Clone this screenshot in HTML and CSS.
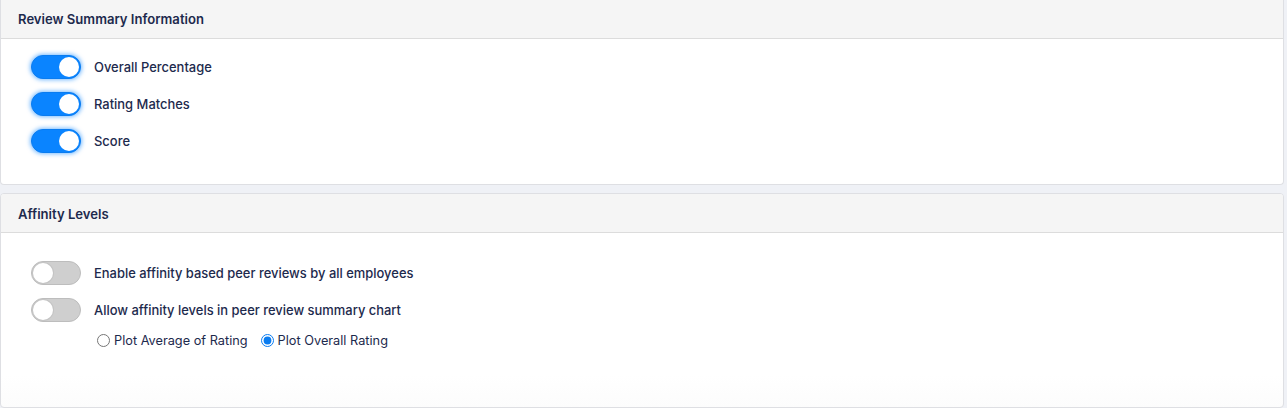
FILE: index.html
```html
<!DOCTYPE html>
<html lang="en">
<head>
  <meta charset="UTF-8" />
  <title>Review Settings</title>
  <link rel="stylesheet" href="styles.css">
</head>
<body>
  <section class="card card-summary">
    <div class="card-head">Review Summary Information</div>
    <div class="card-body">
      <label class="switch-row">
        <input type="checkbox" class="switch" checked>
        <span>Overall Percentage</span>
      </label>
      <label class="switch-row">
        <input type="checkbox" class="switch" checked>
        <span>Rating Matches</span>
      </label>
      <label class="switch-row">
        <input type="checkbox" class="switch" checked>
        <span>Score</span>
      </label>
    </div>
  </section>

  <section class="card card-affinity">
    <div class="card-head">Affinity Levels</div>
    <div class="card-body">
      <label class="switch-row">
        <input type="checkbox" class="switch">
        <span>Enable affinity based peer reviews by all employees</span>
      </label>
      <label class="switch-row">
        <input type="checkbox" class="switch">
        <span>Allow affinity levels in peer review summary chart</span>
      </label>
      <div class="radio-row">
        <label class="radio"><input type="radio" name="plot"> Plot Average of Rating</label>
        <label class="radio"><input type="radio" name="plot" checked> Plot Overall Rating</label>
      </div>
    </div>
  </section>
</body>
</html>
```

FILE: styles.css
```css
body {
  margin: 0;
  padding: 0 3px 0 0;
  background: #eff1f6;
  font-family: Inter, "Noto Sans", sans-serif;
  color: #1d2a4d;
}
.card {
  background: #fff;
  border: 1px solid #dedfe3;
  border-radius: 4px;
  overflow: hidden;
}
.card-summary {
  border-top: none;
  border-radius: 0 0 4px 4px;
  height: 185px;
  box-sizing: border-box;
}
.card-affinity {
  margin-top: 8px;
  height: 215px;
  box-sizing: border-box;
  background: linear-gradient(#fff 85%, #fcfcfc);
}
.card-head {
  background: #f5f5f5;
  border-bottom: 1px solid #dcdcdc;
  height: 38px;
  line-height: 39px;
  padding-left: 17px;
  font-size: 13.1px;
  font-weight: 600;
}
.card-affinity .card-head {
  height: 38px;
  line-height: 40px;
}
.card-body {
  padding: 16px 0 0 30px;
  display: flex;
  flex-direction: column;
  gap: 13px;
}
.card-affinity .card-body {
  padding-top: 28px;
}
.switch-row {
  display: flex;
  align-items: center;
  gap: 13px;
  font-size: 12.95px;
  font-weight: 500;
  height: 24px;
}
.switch {
  appearance: none;
  margin: 0;
  width: 50px;
  height: 24px;
  border-radius: 12px;
  background: #cfcfcf;
  border: 1px solid #bdbdbd;
  box-sizing: border-box;
  position: relative;
}
.switch::after {
  content: "";
  position: absolute;
  top: 1px;
  left: 1px;
  width: 20px;
  height: 20px;
  border-radius: 50%;
  background: #fff;
  box-shadow: 0 0 0 1px #c4c4c4;
}
.switch:checked {
  background: #0a84ff;
  border-color: #0a7cf0;
  box-shadow: 0 0 4px 1px rgba(10, 132, 255, 0.55);
}
.switch:checked::after {
  left: auto;
  right: 1px;
  box-shadow: none;
}
.radio-row {
  display: flex;
  gap: 13px;
  padding-left: 66px;
  margin-top: -2px;
  font-size: 12.75px;
}
.radio {
  display: flex;
  align-items: center;
  gap: 4px;
}
.radio input {
  margin: 0;
  width: 13px;
  height: 13px;
  accent-color: #0a7cf0;
}
```
